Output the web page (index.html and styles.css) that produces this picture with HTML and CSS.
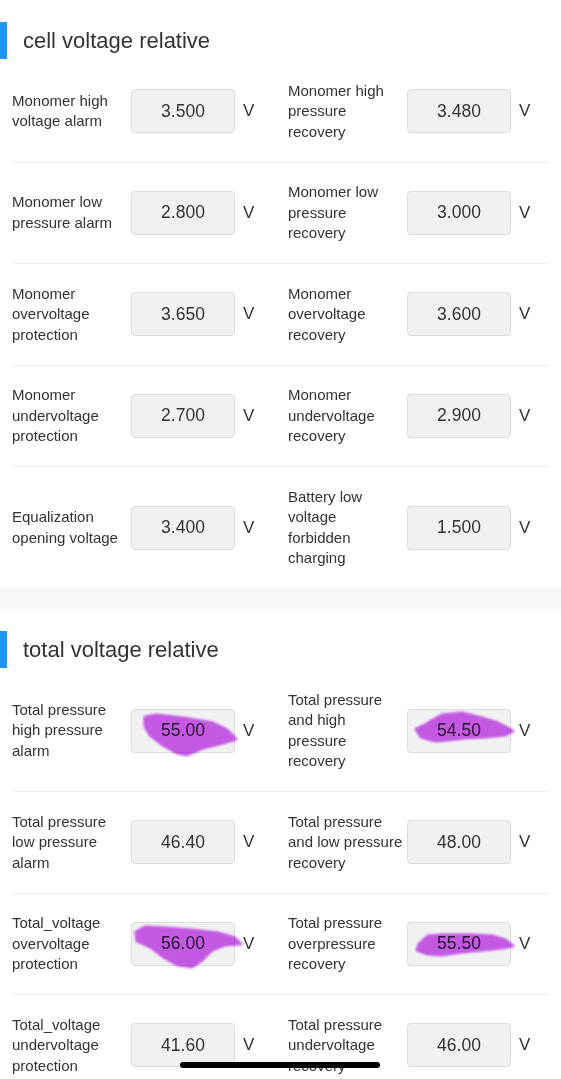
FILE: index.html
```html
<!DOCTYPE html>
<html lang="en">
<head>
  <meta charset="UTF-8">
  <title>Voltage parameters</title>
  <link rel="stylesheet" href="styles.css">
</head>
<body>

  <section class="block">
    <h2 class="title">cell voltage relative</h2>
    <div class="rows">
      <div class="row">
        <div class="item">
          <label>Monomer high voltage alarm</label>
          <div class="field"><input class="val" value="3.500" readonly></div>
          <span class="unit">V</span>
        </div>
        <div class="item">
          <label>Monomer high pressure recovery</label>
          <div class="field"><input class="val" value="3.480" readonly></div>
          <span class="unit">V</span>
        </div>
      </div>
      <div class="row">
        <div class="item">
          <label>Monomer low pressure alarm</label>
          <div class="field"><input class="val" value="2.800" readonly></div>
          <span class="unit">V</span>
        </div>
        <div class="item">
          <label>Monomer low pressure recovery</label>
          <div class="field"><input class="val" value="3.000" readonly></div>
          <span class="unit">V</span>
        </div>
      </div>
      <div class="row">
        <div class="item">
          <label>Monomer overvoltage protection</label>
          <div class="field"><input class="val" value="3.650" readonly></div>
          <span class="unit">V</span>
        </div>
        <div class="item">
          <label>Monomer overvoltage recovery</label>
          <div class="field"><input class="val" value="3.600" readonly></div>
          <span class="unit">V</span>
        </div>
      </div>
      <div class="row">
        <div class="item">
          <label>Monomer undervoltage protection</label>
          <div class="field"><input class="val" value="2.700" readonly></div>
          <span class="unit">V</span>
        </div>
        <div class="item">
          <label>Monomer undervoltage recovery</label>
          <div class="field"><input class="val" value="2.900" readonly></div>
          <span class="unit">V</span>
        </div>
      </div>
      <div class="row">
        <div class="item">
          <label>Equalization opening voltage</label>
          <div class="field"><input class="val" value="3.400" readonly></div>
          <span class="unit">V</span>
        </div>
        <div class="item">
          <label>Battery low voltage<br>forbidden charging</label>
          <div class="field"><input class="val" value="1.500" readonly></div>
          <span class="unit">V</span>
        </div>
      </div>
    </div>
  </section>

  <div class="gap"></div>

  <section class="block">
    <h2 class="title">total voltage relative</h2>
    <div class="rows">
      <div class="row">
        <div class="item">
          <label>Total pressure high pressure alarm</label>
          <div class="field">
            <input class="val" value="55.00" readonly>
            <svg class="scribble" width="104" height="44" viewBox="0 0 104 44">
              <path d="M14 8 L26 6 L52 9 L82 14 L96 21 L105 30 L92 34 L72 39 L56 46 L46 44 L32 36 L19 26 L14 17 Z"/>
            </svg>
          </div>
          <span class="unit">V</span>
        </div>
        <div class="item">
          <label>Total pressure and high pressure recovery</label>
          <div class="field">
            <input class="val" value="54.50" readonly>
            <svg class="scribble" width="104" height="44" viewBox="0 0 104 44">
              <path d="M9 20 L18 16 L26 11 L35 6 L55 4 L75 9 L91 14 L106 22 L98 26 L78 28 L58 29 L41 31 L28 32 L14 28 Z"/>
            </svg>
          </div>
          <span class="unit">V</span>
        </div>
      </div>
      <div class="row">
        <div class="item">
          <label>Total pressure low pressure alarm</label>
          <div class="field"><input class="val" value="46.40" readonly></div>
          <span class="unit">V</span>
        </div>
        <div class="item">
          <label>Total pressure and low pressure recovery</label>
          <div class="field"><input class="val" value="48.00" readonly></div>
          <span class="unit">V</span>
        </div>
      </div>
      <div class="row">
        <div class="item">
          <label>Total_voltage overvoltage protection</label>
          <div class="field">
            <input class="val" value="56.00" readonly>
            <svg class="scribble" width="104" height="44" viewBox="0 0 104 44">
              <path d="M5 10 L14 5 L34 6 L61 8 L87 11 L104 16 L110 22 L94 23 L81 28 L71 38 L61 45 L47 43 L34 36 L21 26 L6 19 Z"/>
            </svg>
          </div>
          <span class="unit">V</span>
        </div>
        <div class="item">
          <label>Total pressure overpressure recovery</label>
          <div class="field">
            <input class="val" value="55.50" readonly>
            <svg class="scribble" width="104" height="44" viewBox="0 0 104 44">
              <path d="M12 22 L21 14 L35 13 L65 13 L85 14 L98 18 L106 24 L95 26 L75 28 L55 30 L35 33 L21 32 L10 28 Z"/>
            </svg>
          </div>
          <span class="unit">V</span>
        </div>
      </div>
      <div class="row">
        <div class="item">
          <label>Total_voltage undervoltage protection</label>
          <div class="field"><input class="val" value="41.60" readonly></div>
          <span class="unit">V</span>
        </div>
        <div class="item">
          <label>Total pressure undervoltage recovery</label>
          <div class="field"><input class="val" value="46.00" readonly></div>
          <span class="unit">V</span>
        </div>
      </div>
    </div>
  </section>

  <div class="home-bar"></div>

</body>
</html>
```

FILE: styles.css
```css
body {
  margin: 0;
  font-family: "Liberation Sans", Arial, sans-serif;
  color: #333;
  background: white;
}
.block {
  background: white;
}
.title {
  margin: 0;
  padding: 22px 0 2px;
  display: flex;
  align-items: center;
  font-size: 22px;
  font-weight: normal;
  color: #333;
}
.title::before {
  content: "";
  width: 7px;
  height: 37px;
  margin-right: 16px;
  background: #1f95f5;
}
.rows {
  margin: 0 12px;
}
.row {
  display: grid;
  grid-template-columns: 276px 1fr;
  padding: 19.5px 0;
  border-bottom: 1px solid #efefef;
}
.row:last-child {
  border-bottom: none;
}
.item {
  display: flex;
  align-items: center;
}
label {
  width: 119px;
  padding-right: 2px;
  box-sizing: border-box;
  font-size: 15px;
  line-height: 20.5px;
  color: #333;
}
.field {
  position: relative;
  width: 104px;
  height: 44px;
}
.val {
  width: 104px;
  height: 44px;
  box-sizing: border-box;
  margin: 0;
  padding: 0;
  border: 1px solid #dcdcdc;
  border-radius: 4px;
  background: #f1f1f1;
  text-align: center;
  font-family: "Liberation Sans", Arial, sans-serif;
  font-size: 17.5px;
  color: #333;
  outline: none;
}
.scribble {
  position: absolute;
  top: 0;
  left: 0;
  overflow: visible;
  mix-blend-mode: multiply;
  filter: blur(0.8px);
  pointer-events: none;
}
.scribble path {
  fill: #cf5ef0;
  stroke: #cf5ef0;
  stroke-width: 3;
  stroke-linejoin: round;
}
.unit {
  margin-left: 8px;
  font-size: 17px;
  color: #333;
}
.gap {
  height: 21px;
  background: #f7f7f7;
}
.home-bar {
  position: fixed;
  left: 180px;
  bottom: 11px;
  width: 200px;
  height: 6px;
  border-radius: 3px;
  background: #000;
}
```
